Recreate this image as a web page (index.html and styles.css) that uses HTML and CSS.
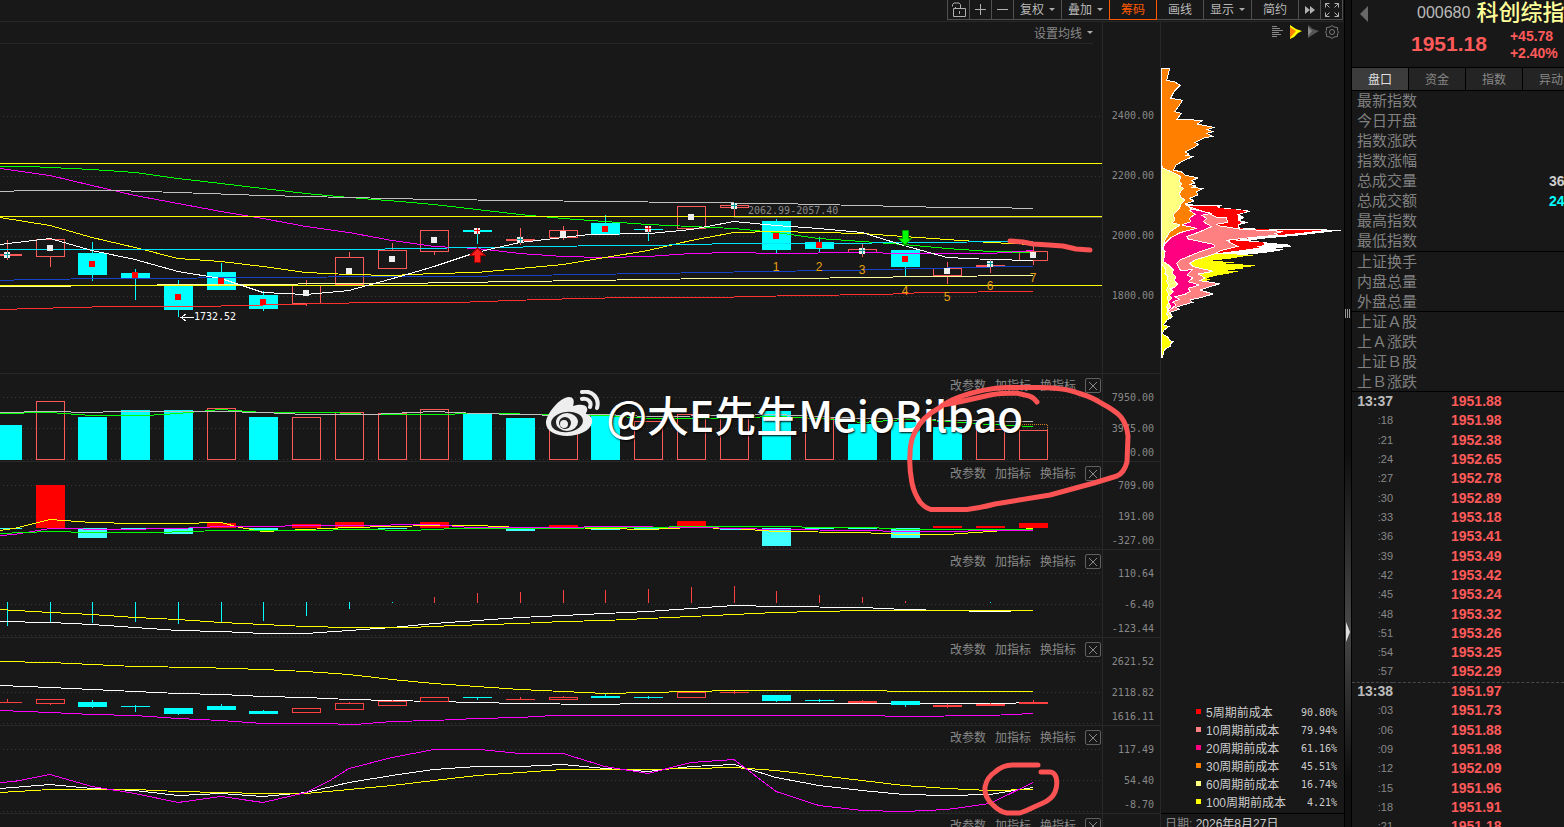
FILE: index.html
```html
<!DOCTYPE html>
<html lang="zh-CN">
<head>
  <meta charset="UTF-8">
  <meta name="viewport" content="width=device-width, initial-scale=1.0">
  <title>科创综指 000680</title>
  <link rel="stylesheet" href="styles.css">
</head>

<body>
  <main class="main">
    <nav class="toolbar">
      <button type="button" class="icon" aria-label="锁定">
        <svg width="16" height="16" viewBox="0 0 16 16"><path d="M2.500 6.500h12v8h-12zM4.500 6.500V5M1.500 4.500V2.500l1.500-1.500h5l1.500 1.500v4M8.500 9v3"/></svg>
      </button>
      <button type="button" class="icon" aria-label="放大">
        <svg width="13" height="13" viewBox="0 0 13 13"><path d="M6.500 1v11M1 6.500h11"/></svg>
      </button>
      <button type="button" class="icon" aria-label="缩小">
        <svg width="13" height="13" viewBox="0 0 13 13"><path d="M1 6.500h11"/></svg>
      </button>
      <button type="button" class="drop">复权</button>
      <button type="button" class="drop">叠加</button>
      <button type="button" class="active">筹码</button>
      <button type="button">画线</button>
      <button type="button" class="drop">显示</button>
      <button type="button">简约</button>
      <button type="button" class="icon" aria-label="更多">
        <svg width="12" height="10" viewBox="0 0 12 10"><path class="solid" d="M1 1l5 4-5 4zM6 1l5 4-5 4z"/></svg>
      </button>
      <button type="button" class="icon" aria-label="全屏">
        <svg width="14" height="14" viewBox="0 0 14 14"><path d="M.5 4.500v-4h4M.5.5l4 4M9.500.5h4v4M13.500.5l-4 4M.5 9.500v4h4M.5 13.500l4-4M9.500 13.500h4v-4M13.500 13.500l-4-4"/></svg>
      </button>
    </nav>

    <div class="body">
      <section class="charts">
        <div class="pane price">
          <div class="plot">
            <div class="ma-bar"><button type="button" class="drop">设置均线</button></div>
            <svg id="price" viewBox="0 22 1102 351" preserveAspectRatio="none"></svg>
          </div>
          <div class="axis"><span>2400.00</span><span>2200.00</span><span>2000.00</span><span>1800.00</span></div>
        </div>

        <div class="pane">
          <div class="plot">
            <div class="tools"><button type="button">改参数</button><button type="button">加指标</button><button type="button">换指标</button><button type="button" class="close" aria-label="关闭"></button></div>
            <svg id="volume" viewBox="0 374 1102 87" preserveAspectRatio="none"></svg>
          </div>
          <div class="axis"><span>7950.00</span><span>3975.00</span><span>0.00</span></div>
        </div>

        <div class="pane">
          <div class="plot">
            <div class="tools"><button type="button">改参数</button><button type="button">加指标</button><button type="button">换指标</button><button type="button" class="close" aria-label="关闭"></button></div>
            <svg id="flow" viewBox="0 462 1102 87" preserveAspectRatio="none"></svg>
          </div>
          <div class="axis"><span>709.00</span><span>191.00</span><span>-327.00</span></div>
        </div>

        <div class="pane">
          <div class="plot">
            <div class="tools"><button type="button">改参数</button><button type="button">加指标</button><button type="button">换指标</button><button type="button" class="close" aria-label="关闭"></button></div>
            <svg id="macd" viewBox="0 550 1102 87" preserveAspectRatio="none"></svg>
          </div>
          <div class="axis"><span>110.64</span><span>-6.40</span><span>-123.44</span></div>
        </div>

        <div class="pane">
          <div class="plot">
            <div class="tools"><button type="button">改参数</button><button type="button">加指标</button><button type="button">换指标</button><button type="button" class="close" aria-label="关闭"></button></div>
            <svg id="boll" viewBox="0 638 1102 87" preserveAspectRatio="none"></svg>
          </div>
          <div class="axis"><span>2621.52</span><span>2118.82</span><span>1616.11</span></div>
        </div>

        <div class="pane">
          <div class="plot">
            <div class="tools"><button type="button">改参数</button><button type="button">加指标</button><button type="button">换指标</button><button type="button" class="close" aria-label="关闭"></button></div>
            <svg id="kdj" viewBox="0 726 1102 87" preserveAspectRatio="none"></svg>
          </div>
          <div class="axis"><span>117.49</span><span>54.40</span><span>-8.70</span></div>
        </div>

        <div class="pane last">
          <div class="plot">
            <div class="tools"><button type="button">改参数</button><button type="button">加指标</button><button type="button">换指标</button><button type="button" class="close" aria-label="关闭"></button></div>
          </div>
          <div class="axis"></div>
        </div>

        <div class="watermark">
          <svg width="56" height="48" viewBox="0 0 56 48">
            <path fill="#eee" d="M24 7c4 0 6 3 4 9 6-2 13-2 14 2 1 3-1 4-1 6 4 1 7 4 6 9-2 8-14 13-25 13C11 46 1 41 1 33 1 24 15 7 24 7z"/>
            <ellipse cx="22" cy="32" rx="16" ry="10" fill="#222" transform="rotate(-7 22 32)"/>
            <ellipse cx="22" cy="32" rx="11" ry="9" fill="#eee"/>
            <circle cx="20" cy="33" r="6" fill="#222"/><circle cx="19" cy="34" r="4" fill="#eee"/><circle cx="23" cy="31" r="1" fill="#222"/>
            <path fill="none" stroke="#eee" stroke-width="4" stroke-linecap="round" d="M37 2c10-2 18 6 15 16M37 9c6-1 10 3 8 8"/>
          </svg>
          <span>@大E先生MeioBilbao</span>
        </div>

        <svg class="pen" viewBox="0 21 1160 806" preserveAspectRatio="none">
          <path d="M1010 241L1023 242 1033 244 1049 245 1063 246 1076 249 1090 250"/>
          <path d="M1037 402Q1033 396 1025 395L1016 393Q1000 393 990 395L959 402 943 405M959 397Q985 388 1007 387.500L1040 387.500Q1066 388 1078 393 1092 397 1101 403 1116 411 1121 417 1127 425 1128 436L1127 462Q1124 473 1117 476L1094 483Q1072 489 1050 495L995 504Q980 508 967 509.500L931 509.500Q925 508 920 502 914 493 912 483 909 467 910 455 910 441 915 432 922 417 939 408 948 401 959 397"/>
          <path d="M1038 765L1012 765Q1003 765 995 772 987 777 985 787 984 797 993 805 1000 812 1007 813L1020 813Q1026 811 1034 807L1043 803Q1052 799 1055 792 1058 785 1056 777 1054 772 1050 772L1041 772"/>
        </svg>
      </section>

      <aside class="cost">
        <div class="cost-icons">
          <button type="button" aria-label="列表"><svg width="14" height="14" viewBox="0 0 14 14"><path stroke="#888" d="M1 1.500h5M1 3.500h8M1 5.500h11M1 7.500h7M1 9.500h9M1 11.500h5"/></svg></button>
          <button type="button" aria-label="筹码分布"><svg width="14" height="14" viewBox="0 0 14 14"><path fill="#ff0" d="M1 0l3 2 3 2 6 2-4 2-4 4-4 2z"/><path fill="#ff8000" d="M1 2l6 4-6 7z"/></svg></button>
          <button type="button" aria-label="历史筹码"><svg width="14" height="14" viewBox="0 0 14 14"><path fill="#555" d="M1 0l5 4 6 2-5 3-6 4z"/><path fill="#888" d="M1 2l4 4-4 5z"/></svg></button>
          <button type="button" aria-label="设置"><svg width="14" height="14" viewBox="0 0 14 14"><path fill="none" stroke="#777" d="M7 .5l2 1.500 3.500.5v3L13.500 7l-1 2v2.500L9 12l-2 1.500L5 12l-3.500-.5V9L.5 7l1-1.500v-3L5 2z"/><circle cx="7" cy="7" r="2.500" fill="none" stroke="#777"/></svg></button>
        </div>
        <!-- chip distribution, one polygon per holding period -->
        <svg class="chips" viewBox="33 0 549 930">
          <polygon fill="#fff" points="33,430 110,433 218,436 205,442 290,450 302,455 270,463 283,474 268,480 297,488 266,495 270,505 520,508 576,511 500,520 440,527 350,535 300,541 363,549 412,553 426,559 375,566 405,569 355,577 300,583 150,600 33,610"/>
          <polygon fill="#ff0" points="33,590 200,582 325,585 275,590 240,596 185,602 255,607 225,611 290,614 321,617 275,623 280,626 228,631 265,634 240,640 215,644 190,649 170,655 183,660 160,663 190,667 213,669 140,672 33,672"/>
          <polygon fill="#f00" points="33,436 200,438 205,444 275,450 290,455 262,463 265,472 262,480 275,488 263,494 265,505 395,510 518,511 430,521 340,530 250,541 345,548 340,556 320,559 330,562 280,570 200,580 33,580"/>
          <polygon class="edge" fill="#ff8080" points="33,440 130,444 180,462 200,472 230,474 232,487 200,493 210,498 275,508 400,514 375,521 385,525 290,534 230,541 240,547 262,559 215,571 190,583 135,600 120,610 130,620 190,634 145,642 165,654 150,662 209,671 175,682 150,690 189,702 155,712 120,720 128,727 100,735 78,742 88,748 60,757 33,757"/>
          <polygon class="edge" fill="#ff0080" points="33,440 120,446 138,450 185,460 155,466 170,475 160,485 184,500 150,515 110,530 115,537 190,553 195,560 150,575 90,600 80,610 92,632 127,629 112,645 128,654 115,665 148,675 115,685 120,694 105,703 75,710 88,718 68,726 78,735 60,750 33,750"/>
          <polygon class="edge" fill="#ff8000" points="34,24 59,24 57,33 50,62 72,64 90,76 72,95 62,115 98,121 85,140 75,155 95,160 80,178 158,181 142,192 162,196 191,202 172,209 188,215 170,220 187,229 165,233 150,240 135,247 145,253 133,262 118,270 105,276 118,282 110,286 128,290 105,300 78,315 70,330 95,336 105,345 144,354 125,362 134,369 120,373 138,378 128,382 158,386 140,395 143,405 118,415 133,423 105,432 118,440 125,447 120,452 135,463 118,475 122,485 95,495 140,505 90,518 60,535 45,550 38,570 34,570"/>
          <polygon class="edge" fill="#ffff80" points="34,317 40,325 75,340 92,350 88,363 95,373 90,380 100,385 88,400 92,412 105,420 93,432 88,445 70,465 75,480 67,488 90,495 60,515 45,540 37,567 45,575 40,605 52,612 70,630 67,640 78,652 73,661 82,672 75,682 60,686 70,696 58,706 65,714 55,726 62,740 52,750 68,770 52,780 34,790"/>
          <polygon class="edge" fill="#ff0" points="34,610 48,630 45,640 54,650 50,663 56,675 50,690 56,702 51,715 57,725 50,740 54,750 50,762 57,772 48,785 40,794 56,800 40,812 38,822 56,833 58,841 70,845 60,852 62,858 50,864 42,872 38,891 34,893"/>
        </svg>
        <table class="legend">
          <tr class="c5"><td>5周期前成本</td><td>90.80%</td></tr>
          <tr class="c10"><td>10周期前成本</td><td>79.94%</td></tr>
          <tr class="c20"><td>20周期前成本</td><td>61.16%</td></tr>
          <tr class="c30"><td>30周期前成本</td><td>45.51%</td></tr>
          <tr class="c60"><td>60周期前成本</td><td>16.74%</td></tr>
          <tr class="c100"><td>100周期前成本</td><td>4.21%</td></tr>
        </table>
        <div class="date">日期: <b>2026年8月27日</b></div>
      </aside>
    </div>
  </main>

  <div class="splitter">
    <i class="grip"></i>
    <i class="handle"></i>
  </div>

  <aside class="quote">
    <header>
      <button type="button" class="prev" aria-label="上一个"></button>
      <div class="name"><span>000680</span><h1>科创综指</h1></div>
      <div class="last-price">
        <strong>1951.18</strong>
        <div><p>+45.78</p><p>+2.40%</p></div>
      </div>
    </header>
    <nav class="tabs">
      <button type="button" class="on">盘口</button>
      <button type="button">资金</button>
      <button type="button">指数</button>
      <button type="button">异动</button>
    </nav>
    <dl>
      <dt>最新指数</dt><dd></dd>
      <dt>今日开盘</dt><dd></dd>
      <dt>指数涨跌</dt><dd></dd>
      <dt>指数涨幅</dt><dd></dd>
      <dt>总成交量</dt><dd>36</dd>
      <dt>总成交额</dt><dd class="cyan">24</dd>
      <dt>最高指数</dt><dd></dd>
      <dt>最低指数</dt><dd></dd>
    </dl>
    <dl>
      <dt>上证换手</dt><dd></dd>
      <dt>内盘总量</dt><dd></dd>
      <dt>外盘总量</dt><dd></dd>
    </dl>
    <dl>
      <dt>上证Ａ股</dt><dd></dd>
      <dt>上Ａ涨跌</dt><dd></dd>
      <dt>上证Ｂ股</dt><dd></dd>
      <dt>上Ｂ涨跌</dt><dd></dd>
    </dl>
    <div class="ticks">
      <table>
        <tr class="min"><th>13:37</th><td>1951.88</td></tr>
        <tr><th>:18</th><td>1951.98</td></tr>
        <tr><th>:21</th><td>1952.38</td></tr>
        <tr><th>:24</th><td>1952.65</td></tr>
        <tr><th>:27</th><td>1952.78</td></tr>
        <tr><th>:30</th><td>1952.89</td></tr>
        <tr><th>:33</th><td>1953.18</td></tr>
        <tr><th>:36</th><td>1953.41</td></tr>
        <tr><th>:39</th><td>1953.49</td></tr>
        <tr><th>:42</th><td>1953.42</td></tr>
        <tr><th>:45</th><td>1953.24</td></tr>
        <tr><th>:48</th><td>1953.32</td></tr>
        <tr><th>:51</th><td>1953.26</td></tr>
        <tr><th>:54</th><td>1953.25</td></tr>
        <tr><th>:57</th><td>1952.29</td></tr>
        <tr class="min next"><th>13:38</th><td>1951.97</td></tr>
        <tr><th>:03</th><td>1951.73</td></tr>
        <tr><th>:06</th><td>1951.88</td></tr>
        <tr><th>:09</th><td>1951.98</td></tr>
        <tr><th>:12</th><td>1952.09</td></tr>
        <tr><th>:15</th><td>1951.96</td></tr>
        <tr><th>:18</th><td>1951.91</td></tr>
        <tr><th>:21</th><td>1951.18</td></tr>
      </table>
    </div>
  </aside>

  <script src="charts.js"></script>
</body>
</html>
```

FILE: styles.css
```css
*{
  box-sizing: border-box;
}
body{
  margin: 0;
  height: 100vh;
  display: flex;
  overflow: hidden;
  background-color: #181818;
  color: #888;
  font-family: "Liberation Sans", "Noto Sans CJK SC", sans-serif;
  font-size: 12px;
}
button{
  padding: 0;
  border: none;
  background: none;
  color: inherit;
  font: inherit;
  cursor: pointer;
}
svg{
  display: block;
}
.main{
  flex: 1;
  min-width: 0;
  display: flex;
  flex-direction: column;
}

/* toolbar */
.toolbar{
  height: 21px;
  padding-right: 1px;
  display: flex;
  justify-content: flex-end;
  flex-shrink: 0;
}
.toolbar button{
  width: 48px;
  height: 20px;
  margin-left: -1px;
  border: 1px solid #505050;
  border-top: none;
  color: #b8b8b8;
  line-height: 18px;
  display: flex;
  align-items: center;
  justify-content: center;
}
.toolbar .icon{
  width: 23px;
}
.toolbar button.drop{
  width: 49px;
}
.toolbar .active{
  color: #ff5a00;
  border-color: #ff5a00;
  position: relative;
}
.toolbar path{
  fill: none;
  stroke: #b0b0b0;
}
.toolbar .solid{
  fill: #b0b0b0;
  stroke: none;
}
.drop::after{
  content: "";
  margin-left: 5px;
  border: 3px solid transparent;
  border-top-color: #aaa;
  border-bottom: none;
}
.body{
  flex: 1;
  min-height: 0;
  display: flex;
}

/* charts */
.charts{
  flex: 1;
  min-width: 0;
  display: flex;
  flex-direction: column;
  position: relative;
}
.pane{
  height: 88px;
  flex-shrink: 0;
  display: flex;
  border-top: 1px solid #282828;
}
.price{
  height: 352px;
}
.last{
  height: auto;
  flex: 1;
  overflow: hidden;
}
.plot{
  flex: 1;
  min-width: 0;
  position: relative;
}
.plot > svg{
  width: 100%;
  height: 100%;
  shape-rendering: crispEdges;
}
.plot text, .axis, .legend td + td{
  font-family: "DejaVu Sans Mono", monospace;
  font-size: 10px;
}
.plot .count{
  font-family: "Liberation Sans", sans-serif;
  font-size: 12px;
}
.axis{
  width: 58px;
  padding: 18px 6px 0 0;
  border-left: 1px solid #282828;
  text-align: right;
  line-height: 12px;
}
.axis span{
  display: block;
  margin-bottom: 19px;
}
.axis span:nth-child(2){
  margin-bottom: 12px;
}
.price .axis{
  padding-top: 88px;
}
.price .axis span{
  margin-bottom: 48px;
}
.ma-bar{
  position: absolute;
  top: 0;
  left: 0;
  right: 9px;
  height: 22px;
  border-bottom: 1px solid #282828;
  display: flex;
  justify-content: flex-end;
}
.ma-bar button{
  display: flex;
  align-items: center;
}
.tools{
  position: absolute;
  top: 4px;
  right: 1px;
  display: flex;
  align-items: flex-start;
  gap: 9px;
  line-height: 17px;
}
.close{
  width: 16px;
  height: 15px;
  border: 1px solid #606060;
  border-radius: 2px;
  background:
    linear-gradient(45deg, transparent 47%, #888 47%, #888 54%, transparent 54%) center / 8px 8px no-repeat,
    linear-gradient(-45deg, transparent 47%, #888 47%, #888 54%, transparent 54%) center / 8px 8px no-repeat;
}
.watermark{
  position: absolute;
  left: 47%;
  top: 363px;
  display: flex;
  align-items: center;
  gap: 5px;
  color: #fff;
  font-family: "Noto Sans CJK SC", sans-serif;
  font-size: 42px;
  font-weight: 500;
  line-height: 60px;
  white-space: nowrap;
  text-shadow: 1px 1px 2px #000;
  pointer-events: none;
}
.pen{
  position: absolute;
  top: 0;
  left: 0;
  width: 100%;
  height: 100%;
  fill: none;
  stroke: #fb5353;
  stroke-width: 5;
  stroke-linecap: round;
  stroke-linejoin: round;
  pointer-events: none;
}

/* cost distribution */
.cost{
  width: 184px;
  display: flex;
  flex-direction: column;
  border-top: 1px solid #282828;
  border-left: 1px solid #282828;
}
.cost-icons{
  height: 38px;
  padding: 3px 5px 0 0;
  display: flex;
  justify-content: flex-end;
  align-items: flex-start;
  gap: 4px;
}
.chips{
  width: 183px;
  height: 310px;
  shape-rendering: crispEdges;
}
.edge{
  stroke: #fff;
  stroke-width: 3;
}
.legend{
  margin: auto 7px 1px 35px;
  border-collapse: collapse;
  color: #ccc;
}
.legend td{
  height: 18px;
  padding: 0;
  line-height: 18px;
}
.legend td + td{
  text-align: right;
}
.legend td:first-child::before{
  content: "";
  display: inline-block;
  width: 5px;
  height: 5px;
  margin-right: 5px;
  vertical-align: 3px;
  background-color: #f00;
}
.legend .c10 td::before{
  background-color: #ff8080;
}
.legend .c20 td::before{
  background-color: #ff0080;
}
.legend .c30 td::before{
  background-color: #ff8000;
}
.legend .c60 td::before{
  background-color: #ffff80;
}
.legend .c100 td::before{
  background-color: #ff0;
}
.date{
  height: 14px;
  padding-left: 4px;
  overflow: hidden;
  border-top: 1px solid #000;
  line-height: 20px;
  white-space: pre;
}
.date b{
  color: #ccc;
  font-weight: normal;
}

/* splitter */
.splitter{
  width: 8px;
  flex-shrink: 0;
  position: relative;
  border: solid #000;
  border-width: 0 1px;
  background: linear-gradient(#101010 55%, #484848 76%, #101010 94%);
}
.grip{
  position: absolute;
  left: 0;
  top: 309px;
  width: 5px;
  height: 9px;
  background: repeating-linear-gradient(90deg, #999 0 1px, transparent 1px 2px);
}
.handle{
  position: absolute;
  left: 1px;
  top: 622px;
  border: solid transparent;
  border-width: 10px 0 10px 4px;
  border-left-color: #ddd;
}

/* quote panel */
.quote{
  width: 212px;
  flex-shrink: 0;
  overflow: hidden;
  display: flex;
  flex-direction: column;
}
.quote header{
  height: 67px;
  flex-shrink: 0;
  position: relative;
}
.prev{
  position: absolute;
  left: 8px;
  top: 6px;
  border: solid transparent;
  border-width: 8px 8px 8px 0;
  border-right-color: #686868;
}
.name{
  height: 26px;
  padding-left: 65px;
  display: flex;
  align-items: center;
  gap: 6px;
  color: #bbb;
  font-size: 16px;
  white-space: nowrap;
}
.name h1{
  margin: 0;
  color: #ffff99;
  font-size: 22px;
  font-weight: 500;
  line-height: 26px;
}
.last-price{
  padding-left: 59px;
  display: flex;
  gap: 23px;
  color: #ff5a5a;
  font-weight: bold;
}
.last-price strong{
  font-size: 21px;
  line-height: 36px;
}
.last-price p{
  margin: 0;
  font-size: 14px;
  line-height: 17px;
}
.last-price div{
  padding-top: 2px;
}
.tabs{
  height: 24px;
  flex-shrink: 0;
  display: flex;
  gap: 1px;
  border: solid #000;
  border-width: 1px 0;
  background-color: #000;
}
.tabs button{
  width: 56px;
  flex-shrink: 0;
  padding-bottom: 2px;
  background-color: #242424;
}
.tabs .on{
  background-color: #3c3c3c;
  color: #e0e0e0;
}
.quote dl{
  margin: 0;
  display: grid;
  grid-template-columns: 192px 1fr;
  grid-auto-rows: 20px;
  padding-left: 5px;
  font-size: 15px;
  line-height: 20px;
  white-space: nowrap;
}
.quote dl + dl, .ticks{
  border-top: 1px solid #000;
  margin-bottom: -1px;
}
dt{
  color: #808080;
}
dd{
  margin: 0;
  color: #ccc;
  font-size: 14px;
  font-weight: bold;
}
dd.cyan{
  color: #0ff;
}
.ticks{
  flex: 1;
  min-height: 0;
  overflow: hidden;
}
.ticks table{
  width: 100%;
  border-collapse: collapse;
}
.ticks th, .ticks td{
  height: 19px;
  padding: 0;
  line-height: 17px;
}
.ticks tr:nth-child(3n) th{
  height: 20px;
}
.ticks th{
  width: 41px;
  font-size: 11px;
  font-weight: normal;
  text-align: right;
}
.ticks .min th{
  color: #bbb;
  font-size: 14px;
  font-weight: bold;
}
.ticks td{
  padding-left: 58px;
  color: #ff5a5a;
  font-size: 14px;
  font-weight: bold;
}
.ticks .next{
  border-top: 1px dashed #484848;
}
```

FILE: charts.js
```js
const RED = '#ff5a5a';
const CYAN = '#00ffff';
const W = 29;

// centre of the i-th period
const cx = i => Math.round(7 + 42.75 * i - 0.1);

const rect = (x, y, w, h, fill) => `<rect x="${x}" y="${y}" width="${w}" height="${h}" fill="${fill}"/>`;
const box = (x, y, w, h, stroke) => `<rect x="${x + 0.5}" y="${y + 0.5}" width="${w - 1}" height="${h - 1}" fill="none" stroke="${stroke}"/>`;
// half a pixel down, so that flat runs fill one pixel row
const line = (color, pts) => `<polyline fill="none" stroke="${color}" transform="translate(0 0.5)" points="${pts}"/>`;
const dots = ys => ys.map(y => `<path stroke="#383838" stroke-dasharray="1 3" d="M3 ${y + 0.5}H1102"/>`).join('');
const text = (x, y, color, s) => `<text x="${x}" y="${y}" fill="${color}">${s}</text>`;
const draw = (id, parts) => { document.getElementById(id).innerHTML = parts.join(''); };

// kind: c = falling (filled), h = rising (hollow), r = flat red
function candles(rows, red) {
  return rows.map(([kind, top, bottom, high, low], i) => {
    const x = cx(i);
    const color = kind === 'c' ? CYAN : red;
    let s = '';
    if (high < top) s += rect(x, high, 1, top - high, color);
    if (low > bottom) s += rect(x, bottom, 1, low - bottom, color);
    s += kind === 'h' ? box(x - 14, top, W, bottom - top, color) : rect(x - 14, top, W, bottom - top, color);
    return s;
  }).join('');
}

// price: last two values are the marker style and its centre
const price = [
  ['r',254,256,240,260,'t',255], ['h',239,257,239,267,'w',248], ['c',253,275,242,281,'r',264],
  ['c',273,278,269,300,'r',275], ['c',284,310,280,317,'r',297], ['c',272,290,263,290,'r',281],
  ['c',295,309,291,311,'r',302], ['h',285,304,280,306,'w',293], ['h',257,285,252,285,'w',271],
  ['h',250,269,243,269,'w',259], ['h',230,252,230,255,'w',240], ['c',230,232,230,244,'x',231],
  ['r',239,241,228,245,'t',240], ['h',230,238,226,240,'w',234], ['c',223,235,215,235,'r',229],
  ['c',229,230,226,241,'x',229], ['h',206,229,206,229,'w',217], ['h',205,208,203,217,'t',206],
  ['c',221,250,219,253,'r',236], ['c',242,249,237,252,'r',245], ['h',249,253,243,257,'t',251],
  ['c',250,267,250,277,'r',259], ['h',268,276,262,284,'w',271], ['r',265,267,260,273,'t',264],
  ['h',251,261,243,265,'w',255]
];

const markers = price.map(([, , , , , m, y], i) => {
  const x = cx(i);
  if (m === 'r') return rect(x - 3, y - 3, 6, 6, '#ff0000');
  let s = rect(x - 3, y - 3, 6, 6, '#eeeeee');
  if (m !== 'w') {
    const c = m === 't' ? '#009a9a' : '#ff0000';
    s += rect(x - 3, y - 1, 6, 1, c) + rect(x, y - 3, 1, 6, c);
  }
  return s;
}).join('');

const counts = [271, 271, 274, 295, 301, 290, 282];

draw('price', [
  dots([116, 176, 236, 296]),
  candles(price, RED),
  line('#00ff00', '0,166 29,166 50,167 92,169 135,172 178,178 221,183 263,188 306,193 349,197 400,201 434,204 477,209 520,214 563,218 605,221 648,224 691,226 734,228 776,232 819,238 862,241 904,244 947,248 990,251 1033,252'),
  line('#ff00ff', '0,168 50,175 92,185 135,195 178,203 221,211 263,218 306,226 349,232 392,240 434,246 477,248 520,253 563,256 605,257 648,256 691,253 734,252 776,253 862,252 904,253 990,253 1020,251 1033,250'),
  line('#c0c0c0', '0,191 29,190 115,190 178,192 263,195 349,197 434,199 520,200 605,201 691,202 776,203 819,204 904,206 947,207 990,207 1033,208'),
  line('#ffff00', '0,217 50,225 92,237 135,247 178,258 221,261 263,266 306,272 349,274 392,275 434,273 477,272 520,268 563,264 605,257 648,250 691,240 734,232 776,231 819,232 862,233 904,236 947,239 990,242 1033,244'),
  line('#00e5ff', '0,249 371,249 400,248 497,247 605,245 648,245 734,243 840,243 904,242 1033,241'),
  line('#1544c8', '0,280 29,279 114,278 285,277 371,276 456,276 585,274 713,272 755,271 840,270 925,268 1012,266 1033,266'),
  line('#ffff99', '0,286 29,286 200,284 400,283 456,282 585,280 713,278 798,278 925,276 1033,275'),
  line('#ff3030', '0,309 71,307 114,306 200,306 285,304 371,302 456,302 541,299 627,297 713,297 798,295 883,294 925,292 1033,291'),
  rect(734, 217, 368, 1, '#555555'),
  rect(0, 163, 1102, 1, '#ffff00'),
  rect(0, 216, 1102, 1, '#ffff00'),
  rect(0, 285, 1102, 1, '#ffff00'),
  line('#ffffff', '0,244 50,238 92,250 135,259 178,271 221,278 263,292 306,294 349,290 400,276 434,266 470,254 493,248 520,242 563,237 590,234 650,233 691,229 734,221 776,225 819,228 862,232 904,245 947,257 990,259 1033,260'),
  markers,
  '<path fill="#ff2020" stroke="#a00000" d="M477.500 248l7 7h-4v7h-6v-7h-4z"/>',
  '<path fill="#00ff00" stroke="#00a000" d="M902 230.500h6v8h3l-6 7-6-7h3z"/>',
  '<path fill="none" stroke="#fff" d="M194 317.500h-13M186 314l-5 3.500 5 3.500"/>',
  text(194, 320, '#fff', '1732.52'),
  text(748, 214, '#888', '2062.99-2057.40'),
  counts.map((y, n) => `<text class="count" x="${cx(18 + n)}" y="${y}" fill="#e8a010" text-anchor="middle">${n + 1}</text>`).join('')
]);

// volume, negative = falling
const vol = [-425, 401, -417, -410, -410, 408, -417, 417, 412, 413, 409, -413, -418, 421, -415, 421, 414, 416, -411, 418, -424, -422, -427, 429, 430];
draw('volume', [
  dots([397, 428, 459]),
  vol.map((v, i) => v < 0 ? rect(cx(i) - 14, -v, W, 460 + v, CYAN) : box(cx(i) - 14, v, W, 460 - v, RED)).join(''),
  '<path fill="none" stroke="#d08020" stroke-dasharray="1 1" d="M1019.500 430v-5.500h28v5.500"/>',
  line('#00ff00', '0,413 50,412 92,415 146,415 178,413 221,409 263,412 330,412 371,414 434,414 477,413 563,414 605,415 648,418 713,418 776,416 819,418 862,422 904,419 947,421 990,424 1033,426'),
  line('#c0c0c0', '0,412 50,411 92,412 115,411 221,411 263,412 306,414 371,414 434,411 477,413 563,415 605,414 648,416 734,415 776,414 819,416 862,418 904,418 947,420 1033,421')
]);

// [top, bottom], bars above the 528 base are red
const flow = [[528,529],[485,528],[528,538],[528,529],[528,534],[523,528],[528,530],[524,528],[522,528],[528,529],[522,528],[528,529],[528,531],[525,528],[528,530],[528,529],[521,528],[528,530],[528,546],[528,529],[528,529],[528,538],[526,528],[526,528],[523,528]];
draw('flow', [
  dots([485, 516, 547]),
  flow.map(([t, b], i) => rect(cx(i) - 14, t, W, b - t, b > 528 ? '#40ffff' : '#ff0000')).join(''),
  line('#ffff00', '0,530 14,528 50,519 92,522 135,523 178,523 221,522 240,527 263,531 306,529 349,527 434,525 477,525 520,527 563,527 605,528 648,529 691,527 734,528 776,531 860,532 904,534 947,534 990,531 1033,528'),
  line('#ff00ff', '0,535 14,534 50,528 115,529 178,528 221,526 350,525 434,524 470,527 563,527 605,526 700,527 776,529 862,530 904,531 1033,530'),
  line('#00ff00', '0,533 50,531 92,532 156,532 221,530 306,530 360,529 410,530 456,528 563,528 605,527 734,526 870,527 904,529 1033,529')
]);

const macd = [[602,626],[602,623],[602,623],[602,622],[602,624],[602,622],[602,621],[602,616],[602,609],[602,603],[597,603],[593,603],[592,603],[590,603],[590,603],[589,603],[587,603],[586,603],[591,603],[595,603],[597,603],[601,603],null,[602,603]];
draw('macd', [
  dots([573, 604, 635]),
  macd.map((m, i) => m ? rect(cx(i), m[0], 1, m[1] - m[0], m[0] < 602 ? '#ff4040' : CYAN) : '').join(''),
  line('#ffffff', '0,621 50,622 92,624 135,627 178,630 221,631 263,633 306,633 349,630 392,627 434,623 477,620 520,617 563,615 605,613 648,611 691,608 734,605 776,606 862,607 904,609 990,611 1033,610'),
  line('#ffff00', '0,609 50,612 92,614 135,617 178,619 221,622 263,624 306,626 349,627 410,627 456,625 520,623 563,621 605,620 648,618 691,616 734,614 776,612 819,611 862,610 1033,610')
]);

draw('boll', [
  dots([661, 692, 723]),
  line('#ffffff', '0,685 50,687 92,689 135,691 178,693 221,694 263,696 306,697 349,699 392,700 434,701 477,702 520,703 600,704 640,703 1000,703 1033,702'),
  candles([
    ['r',702,703,699,703], ['h',699,704,699,705], ['c',702,707,700,708], ['c',706,707,705,712], ['c',708,714,708,715],
    ['c',706,710,704,710], ['c',711,714,710,714], ['h',708,713,708,713], ['h',703,710,702,710], ['h',701,706,700,706],
    ['h',697,702,697,702], ['c',697,698,697,700], ['r',699,700,697,700], ['h',697,700,696,700], ['c',696,698,694,698],
    ['c',697,698,696,699], ['h',692,698,692,698], ['r',692,693,691,694], ['c',695,701,695,702], ['c',700,701,699,702],
    ['r',701,703,700,703], ['c',701,705,701,707], ['r',705,707,704,708], ['r',704,706,703,706], ['r',702,704,700,704]
  ], '#ff4040'),
  line('#ffff00', '0,661 50,662 92,664 135,666 200,667 263,669 306,671 349,674 392,679 434,683 477,686 520,689 563,691 605,693 648,692 691,691 734,690 870,690 904,691 1033,691'),
  line('#ff00ff', '0,710 50,712 92,714 135,715 178,718 221,720 263,723 320,723 355,724 392,721 434,720 477,718 520,717 553,715 870,715 900,716 990,715 1033,713')
]);

draw('kdj', [
  dots([749, 780, 811]),
  line('#ffffff', '0,788 50,784 92,788 135,790 178,795 221,793 263,796 306,792 349,782 392,775 434,769 477,766 520,766 563,764 605,768 648,771 691,766 734,764 776,777 819,785 862,790 904,794 947,795 990,794 1033,787'),
  line('#ffff00', '0,792 50,789 135,789 178,791 221,792 263,793 306,793 349,789 392,785 434,780 477,775 520,772 563,769 648,769 691,768 734,767 776,770 819,775 862,780 904,785 947,788 990,790 1033,789'),
  line('#ff00ff', '0,782 14,781 50,774 92,786 135,793 178,802 221,796 263,802 306,792 330,780 349,768 392,757 434,749 480,749 520,753 563,753 605,766 648,773 691,762 734,759 776,791 819,805 862,810 904,811 947,809 990,803 1033,782')
]);
```
